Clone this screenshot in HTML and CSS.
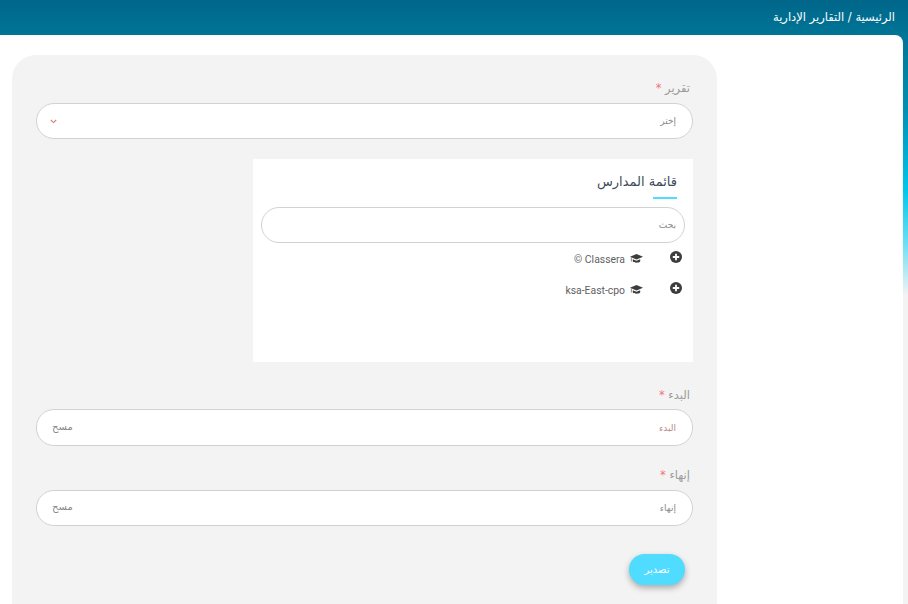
FILE: index.html
```html
<!DOCTYPE html>
<html lang="ar" dir="rtl">
<head>
<meta charset="utf-8">
<title>التقارير الإدارية</title>
<link rel="stylesheet" href="styles.css">
</head>
<body>
<header class="topbar">
  <span class="crumbs">الرئيسية / التقارير الإدارية</span>
</header>
<main class="sheet">
  <form class="panel">
    <div class="field field-report">
      <label class="label">تقرير <span class="req">*</span></label>
      <div class="pill pill-select">
        <span class="pill-text">إختر</span>
        <svg class="chev" width="7" height="5" viewBox="0 0 7 5"><path d="M.8 1l2.7 2.6L6.2 1" fill="none" stroke="#d57f78" stroke-width="1.1"/></svg>
      </div>
    </div>
    <section class="schools">
      <h2 class="schools-title">قائمة المدارس</h2>
      <div class="title-rule"></div>
      <div class="pill pill-search"><span class="pill-text">بحث</span></div>
      <ul class="tree">
        <li class="tree-row">
          <svg class="plus" width="12" height="12" viewBox="0 0 12 12"><circle cx="6" cy="6" r="6" fill="#3d3d3d"/><path d="M6 2.8v6.4M2.8 6h6.4" stroke="#fff" stroke-width="1.8"/></svg>
          <svg class="cap" width="13" height="10" viewBox="0 0 13 10"><path d="M6.5 0L13 2.8 6.5 5.6 0 2.8z" fill="#3d3d3d"/><path d="M2.8 5.2v2.3c1 1.6 6.4 1.6 7.4 0V5.2L6.5 6.8zM.9 3.4v4.2h.6V3.6z" fill="#3d3d3d"/></svg>
          <bdi class="tree-name">© Classera</bdi>
        </li>
        <li class="tree-row">
          <svg class="plus" width="12" height="12" viewBox="0 0 12 12"><circle cx="6" cy="6" r="6" fill="#3d3d3d"/><path d="M6 2.8v6.4M2.8 6h6.4" stroke="#fff" stroke-width="1.8"/></svg>
          <svg class="cap" width="13" height="10" viewBox="0 0 13 10"><path d="M6.5 0L13 2.8 6.5 5.6 0 2.8z" fill="#3d3d3d"/><path d="M2.8 5.2v2.3c1 1.6 6.4 1.6 7.4 0V5.2L6.5 6.8zM.9 3.4v4.2h.6V3.6z" fill="#3d3d3d"/></svg>
          <bdi class="tree-name">ksa-East-cpo</bdi>
        </li>
      </ul>
    </section>
    <div class="field field-start">
      <label class="label label-start">البدء <span class="req">*</span></label>
      <div class="pill pill-date">
        <span class="pill-text pill-start">البدء</span>
        <span class="pill-clear">مسح</span>
      </div>
    </div>
    <div class="field field-end">
      <label class="label">إنهاء <span class="req">*</span></label>
      <div class="pill">
        <span class="pill-text">إنهاء</span>
        <span class="pill-clear pill-clear-end">مسح</span>
      </div>
    </div>
    <div class="actions">
      <button type="button" class="export">تصدير</button>
    </div>
  </form>
</main>
</body>
</html>
```
FILE: styles.css
```css
* { box-sizing: border-box; }
html, body { margin: 0; height: 604px; overflow: hidden; }
body {
  width: 908px;
  font-family: "DejaVu Sans", "Noto Sans", sans-serif;
  background: linear-gradient(180deg, #00668a 0, #007596 35px, #0090b4 110px, #00c6ec 190px, #6fe0f6 245px, #f3f3f3 295px, #f3f3f3 100%);
}
.topbar {
  height: 35px;
  padding: 0 13px 2px 0;
  display: flex;
  align-items: center;
}
.crumbs { color: #fff; font-size: 11.5px; }
.sheet {
  width: 903px;
  height: 569px;
  margin-inline-start: 5px;
  background: #fff;
  border-top-right-radius: 8px;
  padding: 20px 186px 0 0;
}
.panel {
  width: 705px;
  height: 560px;
  background: #f3f3f3;
  border-radius: 24px 24px 0 0;
  padding: 24px 24px 0;
}
.field { display: flex; flex-direction: column; }
.label {
  height: 24px;
  color: #9b9b9b;
  font-size: 11.5px;
  line-height: 18px;
  padding-right: 3px;
}
.label-start { height: 23px; }
.req { color: #f4727c; }
.pill {
  height: 36px;
  background: #fff;
  border: 1px solid #d2d2d2;
  border-radius: 18px;
  display: flex;
  align-items: center;
  justify-content: space-between;
  padding: 0 16px 0 13px;
}
.pill-text { color: #8a8a8a; font-size: 9px; }
.pill-start { color: #b08a8a; }
.pill-clear { color: #8a8a8a; font-size: 10px; margin-left: 2px; margin-top: -2px; }
.pill-clear-end { margin-top: -3px; }
.chev { display: block; }
.schools {
  width: 440px;
  height: 203px;
  margin-top: 20px;
  background: #fff;
  padding: 13px 8px 0;
}
.schools-title {
  margin: 0 8px 0 0;
  color: #3d4a5c;
  font-size: 13px;
  font-weight: 400;
  line-height: 20px;
}
.title-rule {
  width: 24px;
  height: 2px;
  margin: 5px 8px 8px 0;
  background: #4fdcff;
}
.pill-search { padding-right: 8px; }
.tree { list-style: none; margin: 0; padding: 0; }
.tree-row {
  display: flex;
  align-items: center;
  height: 31px;
  padding-right: 3px;
  color: #5f5f5f;
  font-family: Roboto, sans-serif;
  font-size: 10.4px;
}
.plus { margin-left: 27px; margin-top: -3px; }
.cap { margin-left: 5px; margin-top: 1px; }
.tree-name { margin-top: 1px; }
.field-start { margin-top: 24px; }
.pill-date { height: 37px; }
.field-end { margin-top: 20px; }
.actions { padding: 28px 8px 0; }
.export {
  display: block;
  width: 56px;
  height: 31px;
  border: 0;
  border-radius: 16px;
  background: #4fdcff;
  color: #fff;
  font-family: inherit;
  font-size: 10px;
  box-shadow: 0 3px 6px rgba(0, 0, 0, .3);
}
```
